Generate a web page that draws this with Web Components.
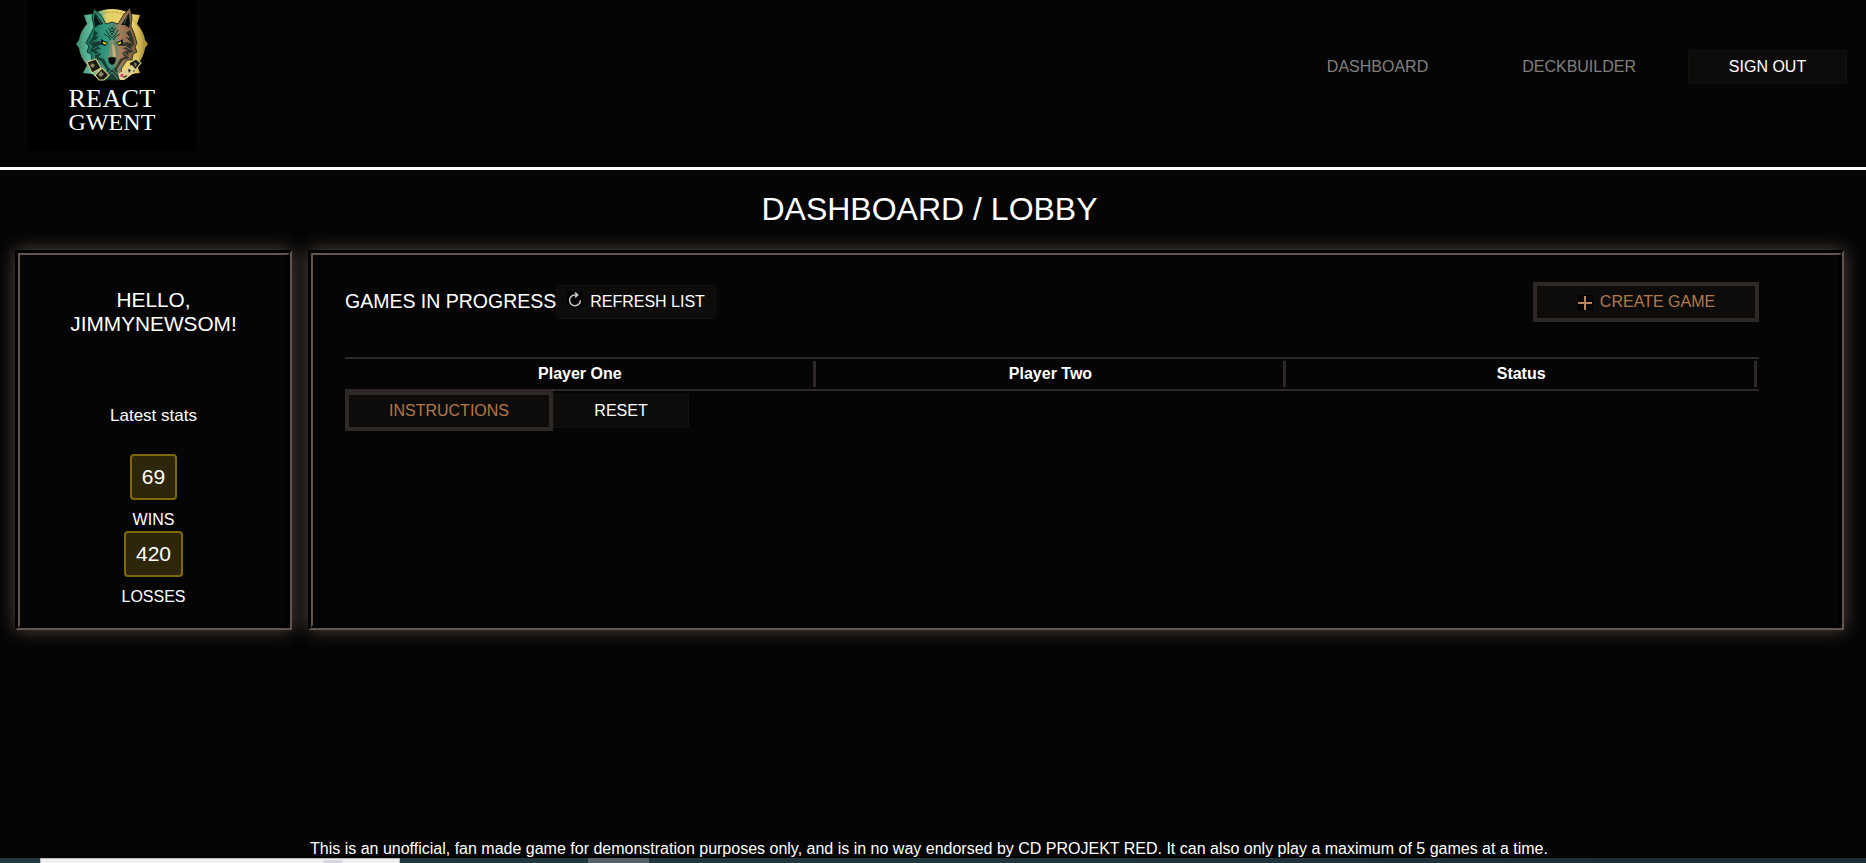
<!DOCTYPE html>
<html lang="en">
<head>
<meta charset="utf-8">
<title>React Gwent</title>
<style>
html,body{margin:0;height:100%;background:#050505;overflow:hidden}
body{font:16px/1.2 "Liberation Sans",Arial,sans-serif;color:#fff}
</style>
</head>
<body>
<gwent-app></gwent-app>
<script>
const define=(name,css,html)=>customElements.define(name,class extends HTMLElement{
  constructor(){super();this.attachShadow({mode:'open'}).innerHTML='<style>*{box-sizing:border-box}:host{box-sizing:border-box}'+css+'</style>'+html;}
});

define('gwent-logo',`
:host{display:flex;flex-direction:column;align-items:center;width:168px;height:151px;background:#000}
svg{display:block;width:84px;height:84px}
span{display:block;font-family:"Liberation Serif",serif;white-space:nowrap;color:#fff}
.one{font-size:26px;line-height:22px;margin-top:4px;letter-spacing:.4px}
.two{font-size:24px;line-height:22px;letter-spacing:.1px;margin-top:1px}
`,`
<svg viewBox="0 0 84 84">
<defs>
<linearGradient id="disc"><stop offset="0" stop-color="#3b8f74"/><stop offset=".22" stop-color="#5fbf9f"/><stop offset=".36" stop-color="#8fbf7c"/><stop offset=".44" stop-color="#e6d069"/><stop offset=".78" stop-color="#efd468"/><stop offset="1" stop-color="#a58a32"/></linearGradient>
<linearGradient id="fur"><stop offset="0" stop-color="#1b6b58"/><stop offset=".4" stop-color="#31987e"/><stop offset=".54" stop-color="#4b8770"/><stop offset=".66" stop-color="#a57d5a"/><stop offset="1" stop-color="#7c563c"/></linearGradient>
</defs>
<path d="M14 15L23 14Q42 4 61 14L70 15L67 24Q74 32 75 40L78 44L75 48Q74 57 67 65L70 73L61 74L54 80H30L22 74L13 73L17 65Q10 57 9 48L6 44L9 40Q10 32 17 24Z" fill="url(#disc)"/>
<circle cx="42" cy="44" r="32" fill="none" stroke="#77682b" stroke-width="1.2" stroke-dasharray="1 1.6" opacity=".7"/>
<path d="M24 9L31 15L36 24L42 22L48 24L54 14L60 8L62 17L61 26L64 33L67 43L65 47L67 52L63 54L62 60L57 60L51 69L54 80H30L33 70L26 61L22 60L21 54L17 52L19 46L16 43L20 35L24 27L22 17Z" fill="url(#fur)" stroke="#0a2019" stroke-width=".8"/>
<path d="M25 13L33 24L28 25L25 28L24 20ZM59 13L60 23L59 28L55 25L51 25Z" fill="#081512"/>
<path d="M27 17L31 24M57 17L54 24" stroke="#3d7561" stroke-width=".8"/>
<path d="M24 30L28 33L25 37L29 36L24 42L29 41L34 44L27 46L31 49L25 50L31 54L28 57L34 59L38 67L42 70L46 67L50 59L55 57L52 53L58 50L53 49L57 46L50 46L55 42L60 43L56 37L60 38L56 33L60 30L63 38L64 44L61 48L63 52L58 53L59 58L53 60L47 69L50 80H34L37 70L31 61L25 59L25 53L20 51L23 46L19 43L23 37Z" fill="#0a211c" opacity=".72"/>
<path d="M21 43L25 40M23 49L27 47M25 55L29 53M29 30L33 34M55 30L51 34" stroke="#4c927b" stroke-width=".8"/>
<path d="M57 39L62 44M55 46L61 50M54 53L59 57M56 34L59 37" stroke="#a8825a" stroke-width=".8"/>
<path d="M42 27L44 31L42 35L40 31ZM36 30Q39 36 42 38Q45 36 48 30M34 34L39 37L42 43L45 37L50 34M38 28L42 32L46 28" fill="none" stroke="#123f34" stroke-width="1"/>
<path d="M31 39L38 43L35 46L31 44ZM53 39L46 43L49 46L53 44Z" fill="#071411"/>
<path d="M33 41.5L37 43.5L35 44.5L33 43.5ZM51 41.5L47 43.5L49 44.5L51 43.5Z" fill="#f1e11d"/>
<path d="M40 40H44L45 53L47 59L42 65L37 59L39 53Z" fill="#7c9070"/>
<path d="M42 44L44.500 46L46 56L43 58Z" fill="#cbb07c"/>
<path d="M38 58Q42 56 46 58L45 63L42 65L39 63Z" fill="#080a09"/>
<path d="M32 65L37 74L42 68L47 74L52 65M36 79L42 72L48 79" fill="none" stroke="#53917b" stroke-width="1"/>
<g fill="#181a13" stroke="#d5c983" stroke-width="1.1">
<path d="M17 62L26 59L31 68L22 73ZM25 75L32 68L39 75L34 80H29ZM59 63L66 59L71 63L65 70L61 68Z"/></g>
<path d="M48 74L62 65L67 71L54 80H50Z" fill="#dfd092"/>
<path d="M22 63L25 65L23 68L20 66ZM31 71L34 74L31 77L28 75ZM64 62L67 64L65 67ZM63 70h2v2h-2z" fill="#8f865a"/>
<path d="M58 69L61 70L59 73ZM53 77l4-2v1l-3 2z" fill="#151510"/>
<path d="M50.500 74h3v3h-3z" fill="#d94d75"/>
</svg><span class="one">REACT</span><span class="two">GWENT</span>`);

define('gwent-button',`
:host{display:inline-flex;align-items:center;justify-content:center;height:34px;background:#0d0c0a;border:1px solid #12110e;white-space:nowrap;flex:none}
:host([framed]){height:40px;border:4px solid #2e2827;color:#b0794f}
:host([rounded]){border-radius:4px}
`,`<slot></slot>`);

define('gwent-header',`
:host{display:flex;justify-content:space-between;align-items:flex-start;height:170px;border-bottom:3px solid #fff;padding:0 19px 0 28px}
nav{display:flex;align-items:center;padding-top:50px;color:#808080}
a{display:block}
.dash{margin-right:94px}.deck{margin-right:52px}
gwent-button{width:159px;color:#fff}
`,`<gwent-logo></gwent-logo><nav><a class="dash">DASHBOARD</a><a class="deck">DECKBUILDER</a><gwent-button>SIGN OUT</gwent-button></nav>`);

define('gwent-panel',`
:host{display:block;border:solid;border-width:3px 2px 2px 3px;border-color:#000 #65544c #65544c #000;box-shadow:0 0 17px #544842}
.in{height:100%;border:solid;border-width:2px 3px 3px 2px;border-color:#65544c #000 #000 #65544c}
`,`<div class="in"><slot></slot></div>`);

define('gwent-stat',`
:host{display:flex;flex-direction:column;align-items:center}
b{font:21px/24px "Liberation Sans",Arial,sans-serif;border:2px solid #7e6a05;background:#2e260a;border-radius:4px;padding:9px 10px 9px;height:46px}
span{line-height:18px;margin-top:11px}
`,`<b><slot name="value"></slot></b><span><slot></slot></span>`);

define('gwent-profile',`
:host{display:flex;flex-direction:column;align-items:center;text-align:center;padding-top:33px}
h2{font-size:20.8px;line-height:24px;font-weight:400;margin:0}
p{margin:71px 0 29px;line-height:18px;font-size:17px}
gwent-stat+gwent-stat{margin-top:2px}
`,`<h2>HELLO,<br>JIMMYNEWSOM!</h2><p>Latest stats</p>
<gwent-stat><span slot="value">69</span>WINS</gwent-stat><gwent-stat><span slot="value">420</span>LOSSES</gwent-stat>`);

define('gwent-table',`
:host{display:grid;grid-template-columns:repeat(3,1fr);gap:2px;padding:2px;border-top:2px solid #2e2827;border-bottom:2px solid #2e2827;height:34px}
div{font-weight:700;text-align:center;border-right:3px solid #2e2827;line-height:26px}
`,`<div>Player One</div><div>Player Two</div><div>Status</div>`);

define('gwent-lobby',`
:host{display:block;padding:27px 80px 0 32px}
.top{display:flex;align-items:center;height:40px;margin-bottom:35px}
h3{font-size:19.5px;font-weight:400;margin:0;width:211px;white-space:nowrap}
.refresh{width:160px}
.create{width:226px;margin-left:auto}
svg{width:16px;height:16px;background:#030303;flex:none;margin-right:7px;position:relative;top:-3px}
.create svg{top:1px}
.row{display:flex;align-items:center}
.ins{width:208px}.reset{width:136px}
`,`<div class="top"><h3>GAMES IN PROGRESS</h3>
<gwent-button class="refresh" rounded><svg viewBox="0 0 16 16" fill="none" stroke="#cfcfcf" stroke-width="1.4"><path d="M10.800 4H8A5.400 5.400 0 1 0 13.400 9.200M8 1.500L10.800 4L8 6.500"/></svg>REFRESH LIST</gwent-button>
<gwent-button class="create" framed><svg viewBox="0 0 16 16" stroke="#b58559" stroke-width="2"><path d="M1 8H15M8 1V15"/></svg>CREATE GAME</gwent-button></div>
<gwent-table></gwent-table>
<div class="row"><gwent-button class="ins" framed>INSTRUCTIONS</gwent-button><gwent-button class="reset">RESET</gwent-button></div>`);

define('gwent-taskbar',`
:host{display:flex;height:5px;background:linear-gradient(90deg,#243840,#22343c 60%,#1c2b34)}
.search{width:360px;margin-left:40px;background:#f1f1f1;border:1px solid #b8b8b8;border-bottom:0;display:flex}
.search i{width:20px;height:3px;margin:1px 0 0 282px;background:#d9d3e2;border-radius:3px 3px 0 0}
.app{width:61px;margin-left:188px;background:#566267}
`,`<div class="search"><i></i></div><div class="app"></div>`);

define('gwent-app',`
:host{display:flex;flex-direction:column;height:863px;width:1866px}
h1{font-size:32px;line-height:36px;font-weight:400;margin:21px 0 23px;text-align:center;padding-right:7px}
main{display:flex;gap:16px;padding:0 22px 0 15px;height:380px}
.side{width:277px}.main{flex:1}
footer{margin-top:auto;padding-left:310px;line-height:18px;height:18px;white-space:nowrap}
`,`<gwent-header></gwent-header><h1>DASHBOARD / LOBBY</h1>
<main><gwent-panel class="side"><gwent-profile></gwent-profile></gwent-panel><gwent-panel class="main"><gwent-lobby></gwent-lobby></gwent-panel></main>
<footer>This is an unofficial, fan made game for demonstration purposes only, and is in no way endorsed by CD PROJEKT RED. It can also only play a maximum of 5 games at a time.</footer>
<gwent-taskbar></gwent-taskbar>`);
</script>
</body>
</html>
